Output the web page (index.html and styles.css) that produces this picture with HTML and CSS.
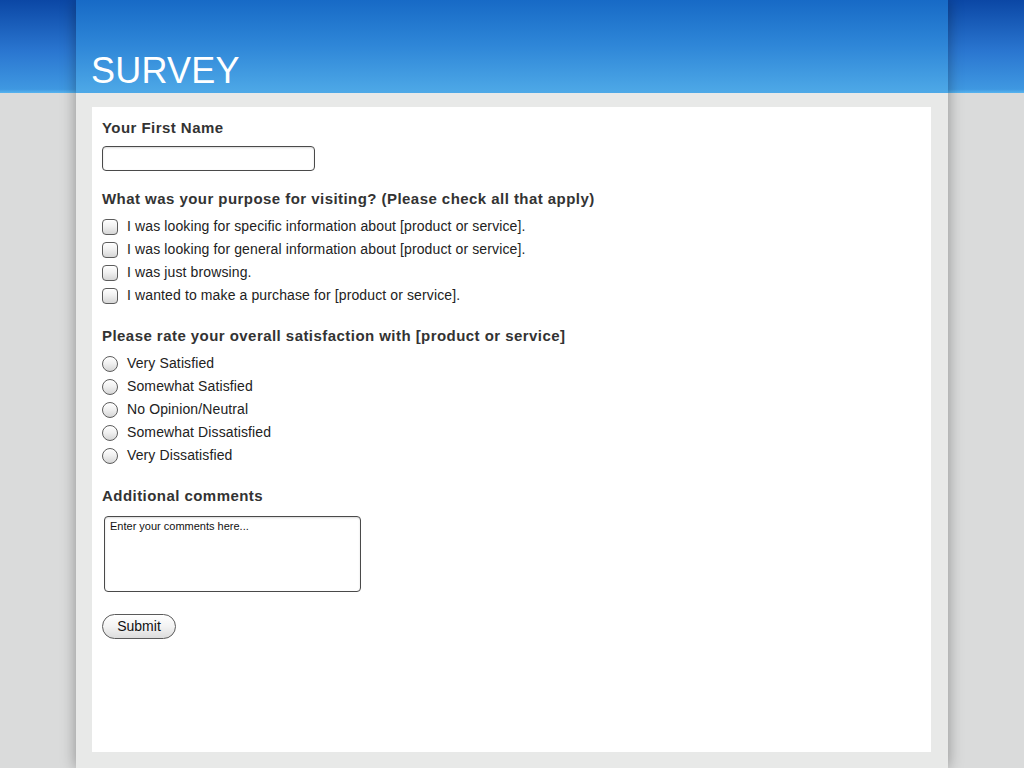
FILE: index.html
```html
<!DOCTYPE html>
<html lang="en">
<head>
<meta charset="utf-8">
<title>Survey</title>
<link rel="stylesheet" href="styles.css">
</head>
<body>
<div class="column">
  <header class="header">
    <h1 class="title">SURVEY</h1>
  </header>
  <main class="content">
    <form class="panel">
      <label class="question" for="fname">Your First Name</label>
      <input class="text-input" id="fname" type="text">

      <div class="question q-gap">What was your purpose for visiting? (Please check all that apply)</div>
      <ul class="options">
        <li><label class="option"><input type="checkbox" class="check"><span>I was looking for specific information about [product or service].</span></label></li>
        <li><label class="option"><input type="checkbox" class="check"><span>I was looking for general information about [product or service].</span></label></li>
        <li><label class="option"><input type="checkbox" class="check"><span>I was just browsing.</span></label></li>
        <li><label class="option"><input type="checkbox" class="check"><span>I wanted to make a purchase for [product or service].</span></label></li>
      </ul>

      <div class="question q-gap2">Please rate your overall satisfaction with [product or service]</div>
      <ul class="options">
        <li><label class="option"><input type="radio" name="sat" class="radio"><span>Very Satisfied</span></label></li>
        <li><label class="option"><input type="radio" name="sat" class="radio"><span>Somewhat Satisfied</span></label></li>
        <li><label class="option"><input type="radio" name="sat" class="radio"><span>No Opinion/Neutral</span></label></li>
        <li><label class="option"><input type="radio" name="sat" class="radio"><span>Somewhat Dissatisfied</span></label></li>
        <li><label class="option"><input type="radio" name="sat" class="radio"><span>Very Dissatisfied</span></label></li>
      </ul>

      <label class="question q-gap2" for="comments">Additional comments</label>
      <textarea class="comments" id="comments">Enter your comments here...</textarea>

      <button type="button" class="submit">Submit</button>
    </form>
  </main>
</div>
</body>
</html>
```
FILE: styles.css
```css
* { box-sizing: border-box; }

html, body {
  margin: 0;
  padding: 0;
  height: 100%;
}

body {
  background:
    linear-gradient(to bottom, #0b47a5 0%, #2a76d0 55%, #3f98e1 96%, #58b4ef 100%) 0 0 / 100% 93px no-repeat,
    #dadbdb;
  font-family: "Liberation Sans", Arial, Helvetica, sans-serif;
  overflow: hidden;
}

.column {
  width: 872px;
  margin: 0 auto;
  height: 768px;
  display: flex;
  flex-direction: column;
  box-shadow: 0 0 14px rgba(0, 0, 0, 0.35);
  background: #e8e9e8;
}

.header {
  height: 93px;
  flex: none;
  background: linear-gradient(to bottom, #176ac6 0%, #2f87d8 50%, #4ea9e7 100%);
  display: flex;
  align-items: flex-end;
  padding: 0 15px 4px;
}

.title {
  margin: 0;
  font-family: "Liberation Sans", Arial, Helvetica, sans-serif;
  font-weight: normal;
  font-size: 36px;
  line-height: 36px;
  color: #ffffff;
  letter-spacing: 0.2px;
}

.content {
  flex: 1;
  padding: 14px 17px 16px 16px;
}

.panel {
  background: #ffffff;
  height: 645px;
  padding: 12px 10px 0 10px;
  display: flex;
  flex-direction: column;
  align-items: flex-start;
}

.question {
  display: block;
  font-weight: bold;
  font-size: 15px;
  line-height: 18px;
  color: #333333;
  letter-spacing: 0.45px;
}

.q-gap { margin-top: 19px; }
.q-gap2 { margin-top: 20px; }

.text-input {
  margin-top: 9px;
  width: 213px;
  height: 25px;
  border: 1px solid #4a4a4a;
  border-radius: 4px;
  box-shadow: inset 0 1px 2px rgba(0, 0, 0, 0.15);
  background: #fff;
  font: 13px "Liberation Sans", Arial, sans-serif;
  padding: 2px 6px;
}

.options {
  list-style: none;
  margin: 7px 0 0 0;
  padding: 0;
}

.option {
  display: flex;
  align-items: center;
  height: 23px;
  font-size: 14px;
  line-height: 23px;
  color: #222222;
  letter-spacing: 0.12px;
}

.check,
.radio {
  -webkit-appearance: none;
  appearance: none;
  width: 16px;
  height: 16px;
  margin: 0 9px 0 0;
  border: 1px solid #5c5c5c;
  background: linear-gradient(to bottom, #ffffff 0%, #f1f1f1 45%, #d6d6d6 100%);
  box-shadow: inset 0 1px 1px rgba(255, 255, 255, 0.8);
  flex: none;
}

.check { border-radius: 4px; }
.radio { border-radius: 50%; }

.comments {
  margin: 11px 0 0 2px;
  width: 257px;
  height: 76px;
  border: 1px solid #4a4a4a;
  border-radius: 4px;
  box-shadow: inset 0 1px 2px rgba(0, 0, 0, 0.15);
  font: 11px/13px "Liberation Sans", Arial, sans-serif;
  color: #111;
  padding: 3px 5px;
  resize: none;
}

.submit {
  margin-top: 22px;
  width: 74px;
  height: 25px;
  border: 1px solid #5a5a5a;
  border-radius: 13px;
  background: linear-gradient(to bottom, #ffffff 0%, #f3f3f3 50%, #dcdcdc 100%);
  font: 14px/23px "Liberation Sans", Arial, sans-serif;
  color: #111;
  padding: 0;
}
```
